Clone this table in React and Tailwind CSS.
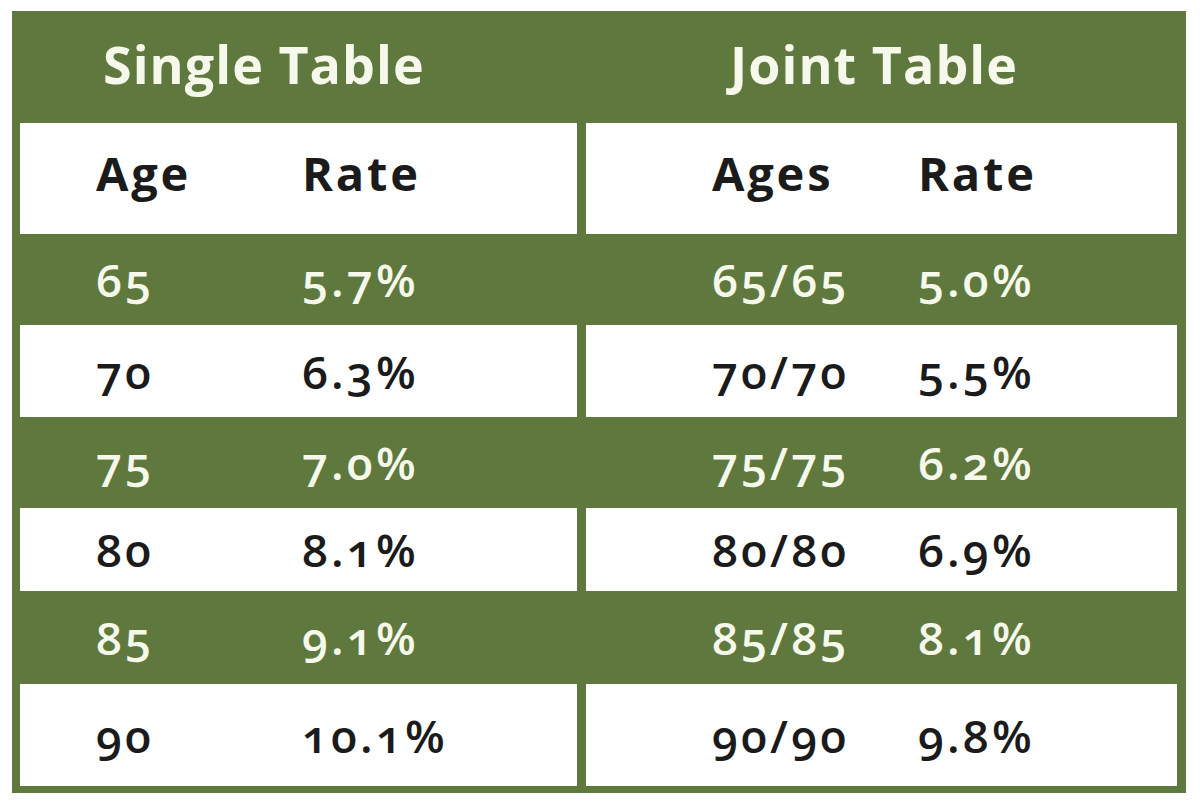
const single = [
  ['65', '5.7%'],
  ['70', '6.3%'],
  ['75', '7.0%'],
  ['80', '8.1%'],
  ['85', '9.1%'],
  ['90', '10.1%'],
];

const joint = [
  ['65/65', '5.0%'],
  ['70/70', '5.5%'],
  ['75/75', '6.2%'],
  ['80/80', '6.9%'],
  ['85/85', '8.1%'],
  ['90/90', '9.8%'],
];

// row heights as they sit in the picture
const rowHeights = ['h-[91px]', 'h-[92px]', 'h-[91px]', 'h-[83px]', 'h-[93px]', 'h-[102px]'];

function Row({ a, b, dark, height, indent }) {
  return (
    <div
      className={`flex items-center ${height} ${indent} ${
        dark ? 'bg-white text-[#1b1b1b]' : 'text-[#f5f8ea]'
      }`}
    >
      <span className="w-[206px] shrink-0">{a}</span>
      <span>{b}</span>
    </div>
  );
}

function Table({ title, titleIndent, label, indent, rows }) {
  return (
    <div className="flex flex-col">
      <div className={`flex h-[112px] items-center pb-[6px] ${titleIndent}`}>
        <h2 className="text-[52px] font-bold leading-none tracking-[0.02em] text-[#f5f8ea]">{title}</h2>
      </div>
      <div className={`flex h-[111px] items-center bg-white pb-[10px] text-[47px] font-bold tracking-[0.06em] text-[#1b1b1b] ${indent}`}>
        <span className="w-[206px] shrink-0">{label}</span>
        <span>Rate</span>
      </div>
      <div className="text-[46px] font-semibold tracking-[0.07em] oldstyle-nums">
        {rows.map(([a, b], i) => (
          <Row key={a} a={a} b={b} dark={i % 2 === 1} height={rowHeights[i]} indent={indent} />
        ))}
      </div>
    </div>
  );
}

export default function App() {
  return (
    <div className="h-[807px] w-full bg-white pl-[12px] pt-[11px]" style={{ fontFamily: '"Open Sans", "Noto Sans", sans-serif' }}>
      <div className="grid h-[782px] w-[1174px] grid-cols-[557px_591px] gap-x-[9px] bg-[#5f783d] pl-[8px] pr-[9px]">
        <Table title="Single Table" titleIndent="pl-[83px]" label="Age" indent="pl-[76px]" rows={single} />
        <Table title="Joint Table" titleIndent="pl-[144px]" label="Ages" indent="pl-[126px]" rows={joint} />
      </div>
    </div>
  );
}
